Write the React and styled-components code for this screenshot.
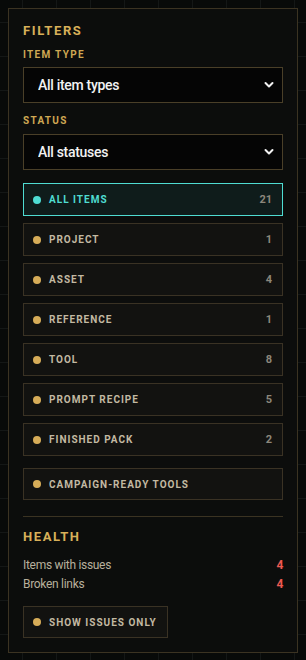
import React from "react";
import styled, { createGlobalStyle } from "styled-components";

const Global = createGlobalStyle`
  html, body { margin: 0; padding: 0; }
  body {
    padding: 8px;
    background-color: #080a09;
    background-image:
      linear-gradient(to right, #141716 1px, transparent 1px),
      linear-gradient(to bottom, #141716 1px, transparent 1px);
    background-size: 34px 34px;
    background-position: 22px 22px;
    font-family: Roboto, "Liberation Sans", sans-serif;
    min-height: 660px;
    box-sizing: border-box;
  }
  * { box-sizing: border-box; }
`;

const Panel = styled.aside`
  width: 290px;
  background: #0c0d0c;
  border: 1px solid #3b3322;
  padding: 14px;
  display: flex;
  flex-direction: column;
`;

const Heading = styled.h2`
  margin: 0;
  font-size: 13px;
  line-height: 16px;
  font-weight: 700;
  letter-spacing: 1.6px;
  color: #d8b059;
  text-transform: uppercase;
`;

const Label = styled.label`
  display: block;
  font-size: 10px;
  line-height: 12px;
  font-weight: 700;
  letter-spacing: 1.3px;
  color: #cfa853;
  text-transform: uppercase;
  margin: ${(p) => p.$mt}px 0 ${(p) => p.$mb}px;
`;

const SelectWrap = styled.div`
  position: relative;
`;

const Select = styled.select`
  appearance: none;
  -webkit-appearance: none;
  width: 100%;
  height: 36px;
  background: #050505;
  border: 1px solid #4a3f28;
  border-radius: 0;
  color: #f2f2f2;
  font-family: Roboto, "Liberation Sans", sans-serif;
  font-size: 14px;
  font-weight: 500;
  letter-spacing: -0.3px;
  padding: 0 30px 0 14px;
  outline: none;
`;

const Chevron = styled.svg`
  position: absolute;
  right: 9px;
  top: 50%;
  margin-top: -4px;
  width: 10px;
  height: 8px;
  pointer-events: none;
`;

const List = styled.div`
  display: flex;
  flex-direction: column;
  gap: 7px;
  margin-top: 13px;
`;

const Pill = styled.button`
  display: flex;
  align-items: center;
  width: 100%;
  height: ${(p) => p.$h || 33}px;
  padding: 0 10px 0 9px;
  background: ${(p) => (p.$active ? "#0f1c1b" : "#121210")};
  border: 1px solid ${(p) => (p.$active ? "#4fdcd2" : "#3a3224")};
  border-radius: 0;
  font-family: Roboto, "Liberation Sans", sans-serif;
  cursor: pointer;
  text-align: left;
`;

const Dot = styled.span`
  width: 8px;
  height: 8px;
  border-radius: 50%;
  flex: none;
  background: ${(p) => (p.$active ? "#4fdcd2" : "#d6ac58")};
  margin-right: 8px;
`;

const PillText = styled.span`
  flex: 1;
  font-size: 10px;
  font-weight: 700;
  letter-spacing: 1px;
  text-transform: uppercase;
  color: ${(p) => (p.$active ? "#4fdcd2" : "#c3b9a2")};
`;

const Count = styled.span`
  font-size: 11px;
  font-weight: 700;
  color: #8c877b;
`;

const Solo = styled.div`
  margin-top: 12px;
`;

const Divider = styled.hr`
  border: 0;
  border-top: 1px solid #3b3322;
  margin: 16px 0 12px;
  width: 100%;
`;

const Stat = styled.div`
  display: flex;
  justify-content: space-between;
  align-items: center;
  font-size: 12px;
  line-height: 19px;
  letter-spacing: -0.3px;
  color: #b8b09c;
`;

const StatValue = styled.span`
  color: #ee5a52;
  font-weight: 700;
`;

const Stats = styled.div`
  margin-top: 11px;
  display: flex;
  flex-direction: column;
`;

const IssuesButton = styled(Pill)`
  width: auto;
  align-self: flex-start;
  margin-top: 12px;
  padding-right: 10px;
`;

const items = [
  ["Project", 1],
  ["Asset", 4],
  ["Reference", 1],
  ["Tool", 8],
  ["Prompt recipe", 5],
  ["Finished pack", 2],
];

const ChevronIcon = () => (
  <Chevron viewBox="0 0 10 8">
    <path d="M1.5 2 L5 5.5 L8.5 2" fill="none" stroke="#f2f2f2" strokeWidth="2" strokeLinecap="round" strokeLinejoin="round" />
  </Chevron>
);

export default function App() {
  return (
    <>
      <Global />
      <Panel>
        <Heading>Filters</Heading>
        <Label $mt={10} $mb={6}>Item type</Label>
        <SelectWrap>
          <Select defaultValue="all">
            <option value="all">All item types</option>
          </Select>
          <ChevronIcon />
        </SelectWrap>
        <Label $mt={12} $mb={7}>Status</Label>
        <SelectWrap>
          <Select defaultValue="all">
            <option value="all">All statuses</option>
          </Select>
          <ChevronIcon />
        </SelectWrap>
        <List>
          <Pill $active>
            <Dot $active />
            <PillText $active>All items</PillText>
            <Count>21</Count>
          </Pill>
          {items.map(([name, n]) => (
            <Pill key={name}>
              <Dot />
              <PillText>{name}</PillText>
              <Count>{n}</Count>
            </Pill>
          ))}
        </List>
        <Solo>
          <Pill $h={32}>
            <Dot />
            <PillText>Campaign-ready tools</PillText>
          </Pill>
        </Solo>
        <Divider />
        <Heading>Health</Heading>
        <Stats>
          <Stat>
            <span>Items with issues</span>
            <StatValue>4</StatValue>
          </Stat>
          <Stat>
            <span>Broken links</span>
            <StatValue>4</StatValue>
          </Stat>
        </Stats>
        <IssuesButton $h={32}>
          <Dot />
          <PillText>Show issues only</PillText>
        </IssuesButton>
      </Panel>
    </>
  );
}
